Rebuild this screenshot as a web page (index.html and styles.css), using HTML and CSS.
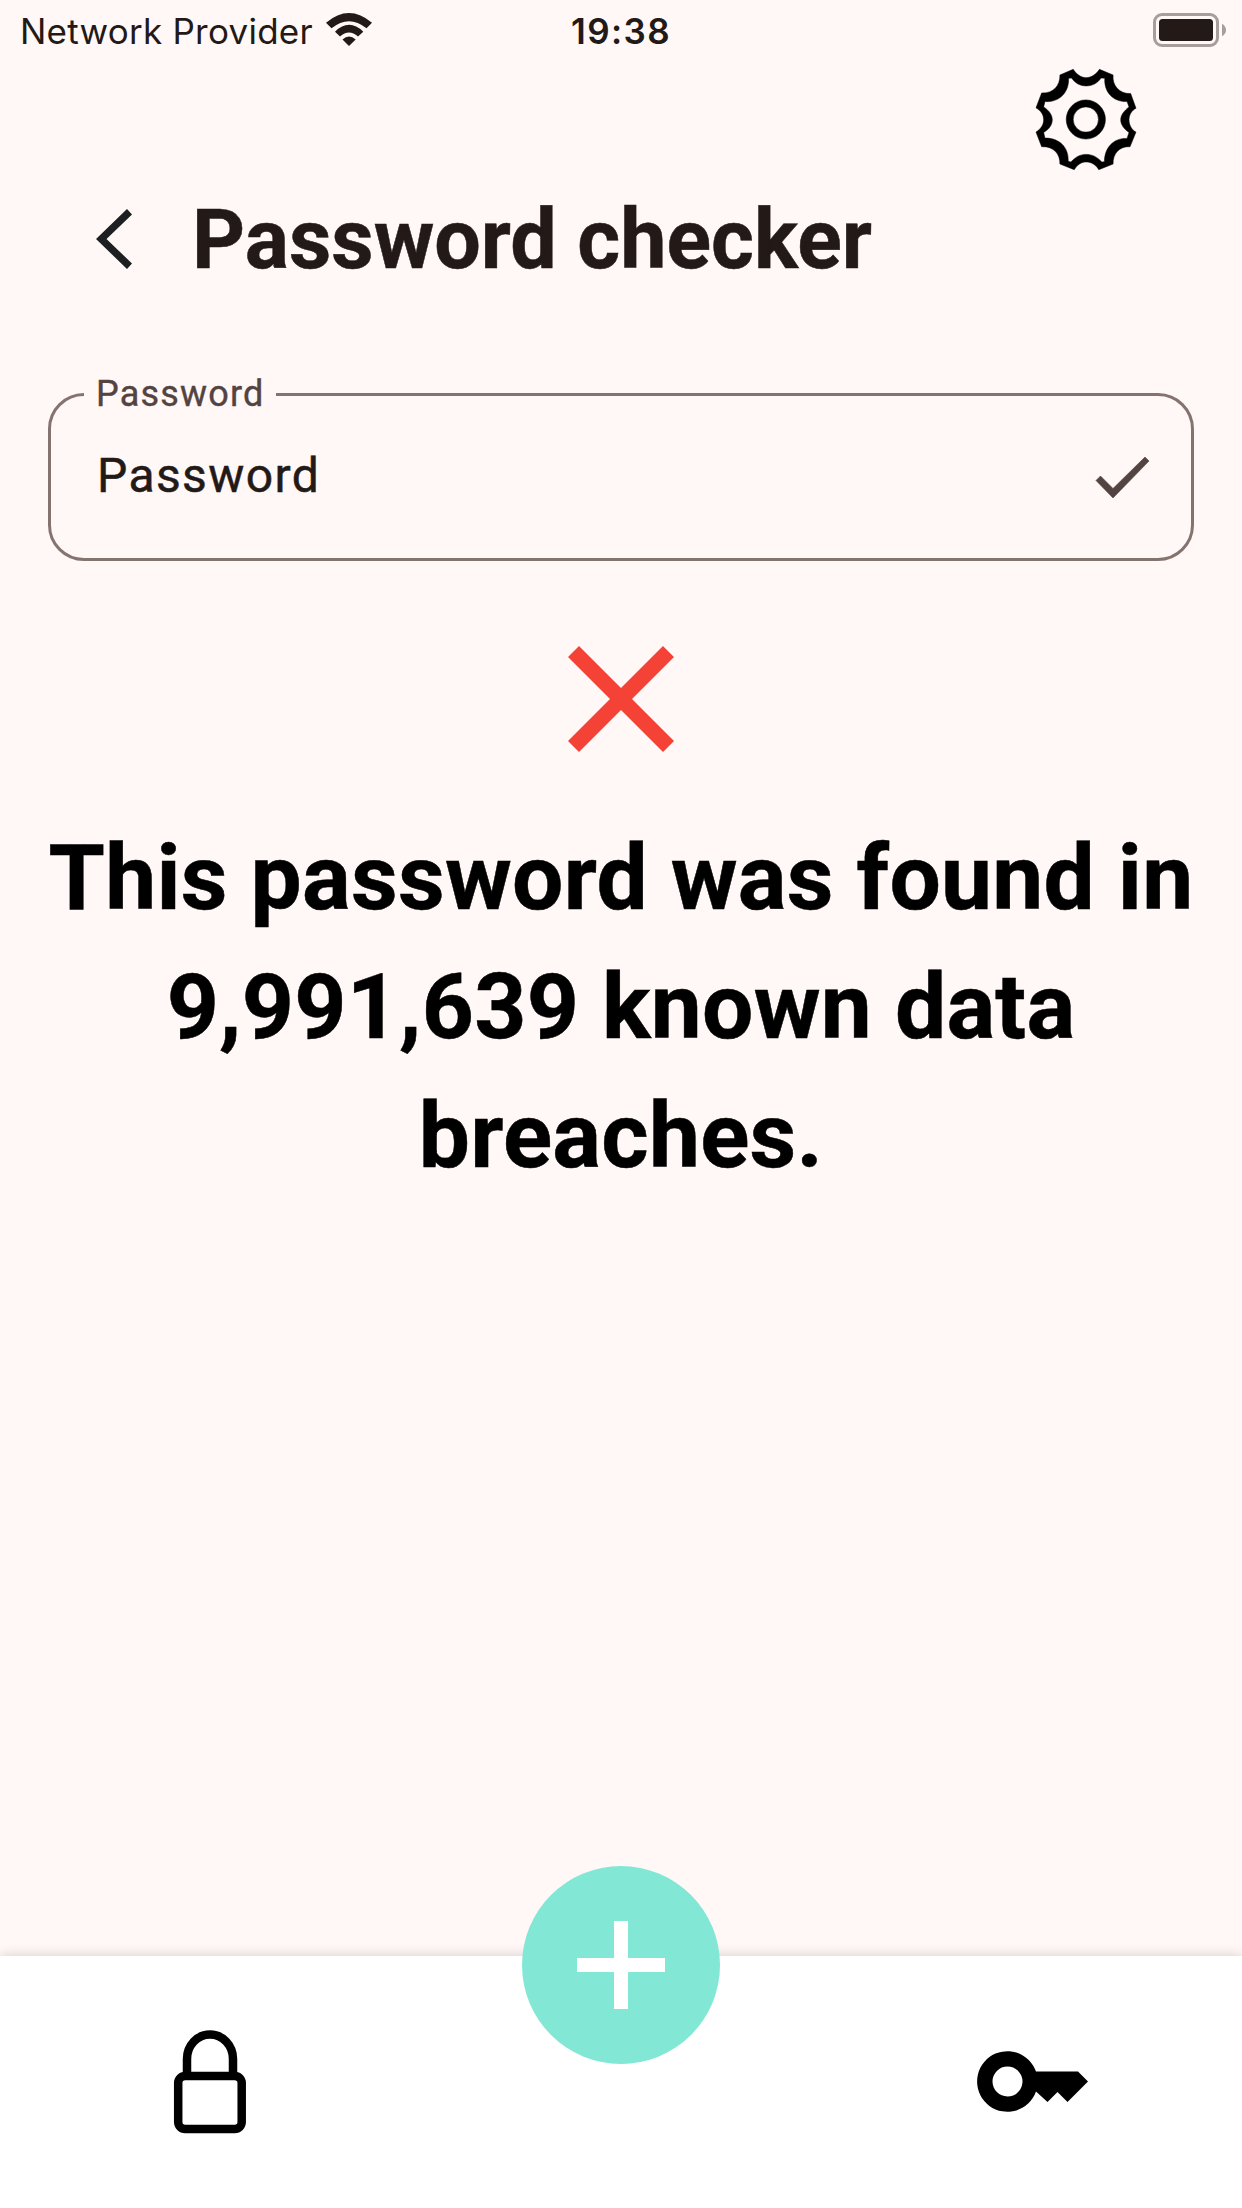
FILE: index.html
```
<!DOCTYPE html>
<html lang="en">
<head>
<meta charset="utf-8">
<title>Password checker</title>
<link rel="stylesheet" href="styles.css">
</head>
<body>
<div class="screen">
  <header class="status">
    <div class="carrier"><span class="carrier-name">Network Provider</span>
      <svg class="wifi" viewBox="0 0 46 33"><path d="M0 9.7Q23-9.7 46 9.7L40.5 15.3Q23 1 5.5 15.3ZM9 18.7Q23 5 37.300 18.700L32 23.500Q23 15.500 14 23.500ZM16.500 26.500Q23 20.500 29.700 26.500L23 33Z"/></svg>
    </div>
    <span class="clock">19:38</span>
    <svg class="battery" viewBox="0 0 73 34"><rect class="battery-case" x="1.500" y="1.500" width="63" height="31" rx="7.500"/><rect x="6" y="6" width="54" height="22" rx="3.500"/><path class="battery-tip" d="M69 10.700Q73 13 73 17T69 23.300Z"/></svg>
  </header>
  <div class="tools">
    <svg class="gear" viewBox="48 28 301 302"><path fill-rule="evenodd" d="M120 45L160 28C170 43 183 53 199 53S229 43 239 28L280 45C277 78 300 102 333 101L349 145C335 152 328 166 328 180S335 210 349 217L331 261C300 259 279 281 280 313L237 330C228 315 214 307 199 307S173 315 163 330L120 313C121 281 99 259 65 261L48 217C63 207 71 195 71 180S63 153 48 144L65 99C99 101 121 78 120 45ZM146 55C148 98 118 128 75 125L71 141C90 154 97 167 97 180S90 207 71 218L75 235C118 234 147 263 145 305L153 307C167 291 182 284 199 284S232 291 246 307L254 306C254 263 282 234 322 236L328 218C312 207 303 194 303 180S312 154 328 141L322 125C282 127 252 98 255 55L244 54C233 70 217 78 199 78S166 70 155 54Z"/><path fill-rule="evenodd" d="M139 179A59 59 0 1 0 257 179A59 59 0 1 0 139 179ZM160 179A38 38 0 1 1 236 179A38 38 0 1 1 160 179Z"/></svg>
  </div>
  <div class="heading">
    <svg class="back" viewBox="0 0 36 60"><path d="M31 0L36 5.500L10.500 30L36 54.500L31 60L0 30Z"/></svg>
    <h1 class="title">Password checker</h1>
  </div>
  <main class="content">
    <fieldset class="field">
      <legend class="label">Password</legend>
      <div class="entry"><span class="value">Password</span>
        <svg class="check" viewBox="0 0 53 41"><path d="M0 23.500L4.500 19L17 31.500L49 0L53 4L17 41Z"/></svg>
      </div>
    </fieldset>
    <svg class="cross" viewBox="0 0 106 106"><path d="M11 0L53 42L95 0L106 11L64 53L106 95L95 106L53 64L11 106L0 95L42 53L0 11Z"/></svg>
    <p class="message">This password was found in 9,991,639 known data breaches.</p>
  </main>
  <nav class="nav">
    <svg class="lock" viewBox="0 0 72 104"><path d="M13 46V29A23 24.500 0 0 1 59 29V46"/><rect x="4.200" y="46" width="63.500" height="53" rx="7"/></svg>
    <div class="add"><svg class="plus" viewBox="0 0 88 88"><path d="M37 0H51V37H88V51H51V88H37V51H0V37H37Z"/></svg></div>
    <svg class="key" viewBox="0 0 111 61"><path fill-rule="evenodd" d="M59 20.500A30.300 30.300 0 1 0 59 40.500L70.500 51L80.500 41L90.500 51L111 30.500L101 20.500ZM15.500 30.500A15 15 0 1 1 45.500 30.500A15 15 0 1 1 15.500 30.500Z"/></svg>
  </nav>
</div>
</body>
</html>
```
FILE: styles.css
```
* { box-sizing: border-box; }
body { margin: 0; background: #fff8f6; font-family: Roboto, sans-serif; color: #231917; }
svg { display: block; flex: none; overflow: visible; }
.screen { height: 2208px; display: flex; flex-direction: column; overflow: hidden; }
.status { height: 60px; display: grid; grid-template-columns: 1fr auto 1fr; align-items: start; padding: 10px 16px 0; font: 35px/42px Inter, sans-serif; fill: #231917; }
.carrier { display: flex; gap: 13px; padding-left: 4px; }
.carrier-name { white-space: nowrap; letter-spacing: .25px; }
.wifi { width: 46px; height: 33px; margin-top: 3px; }
.clock { font-weight: 600; letter-spacing: 1.4px; }
.battery { width: 73px; height: 34px; justify-self: end; margin-top: 3px; }
.battery-case { fill: none; stroke: #a79d9b; stroke-width: 3; }
.battery-tip { fill: #a79d9b; }
.tools { height: 119px; display: flex; justify-content: flex-end; padding: 9px 106px 0 0; }
.gear { width: 100px; height: 101px; stroke: #000; stroke-width: 1.5; }
.heading { height: 120px; display: flex; align-items: center; padding-left: 96px; gap: 60px; }
.back { width: 36px; height: 60px; fill: #1d2020; }
.title { margin: 0; padding-top: 2px; font-size: 82.5px; line-height: 96px; font-weight: 700; white-space: nowrap; -webkit-text-stroke: .5px currentColor; }
.content { flex: 1; padding: 74px 48px 0; display: flex; flex-direction: column; align-items: center; }
.field { width: 1146px; height: 188px; margin: 0; padding: 0 42px 0 46px; border: 3px solid #857370; border-radius: 36px; }
.label { margin-left: -13px; padding: 0 11px 0 12px; font-size: 36px; line-height: 42px; letter-spacing: 1.2px; color: #534341; -webkit-text-stroke: .4px currentColor; }
.entry { height: 120px; display: flex; align-items: center; justify-content: space-between; }
.value { font-size: 48px; line-height: 56px; letter-spacing: 1.4px; padding-top: 2px; -webkit-text-stroke: .5px currentColor; }
.check { width: 53px; height: 41px; fill: #534341; stroke: #534341; stroke-width: .6; margin-top: 4px; }
.cross { width: 106px; height: 106px; margin-top: 85px; fill: #f44336; }
.message { margin: 62px -20px 0; font-size: 91px; line-height: 129px; font-weight: 700; letter-spacing: .25px; text-align: center; color: #000; -webkit-text-stroke: .5px currentColor; }
.nav { height: 252px; background: #fff; box-shadow: 0 0 12px rgba(0,0,0,.18); display: grid; grid-template-columns: 1fr auto 1fr; padding: 0 154px; }
.lock { width: 72px; height: 104px; margin: 74px 0 0 20px; fill: none; stroke: #000; stroke-width: 8.5; }
.add { width: 198px; height: 198px; margin-top: -90px; border-radius: 50%; background: #82e7d4; display: flex; align-items: center; justify-content: center; }
.plus { width: 88px; height: 88px; fill: #fff; }
.key { width: 111px; height: 61px; margin-top: 95px; justify-self: end; }
```
